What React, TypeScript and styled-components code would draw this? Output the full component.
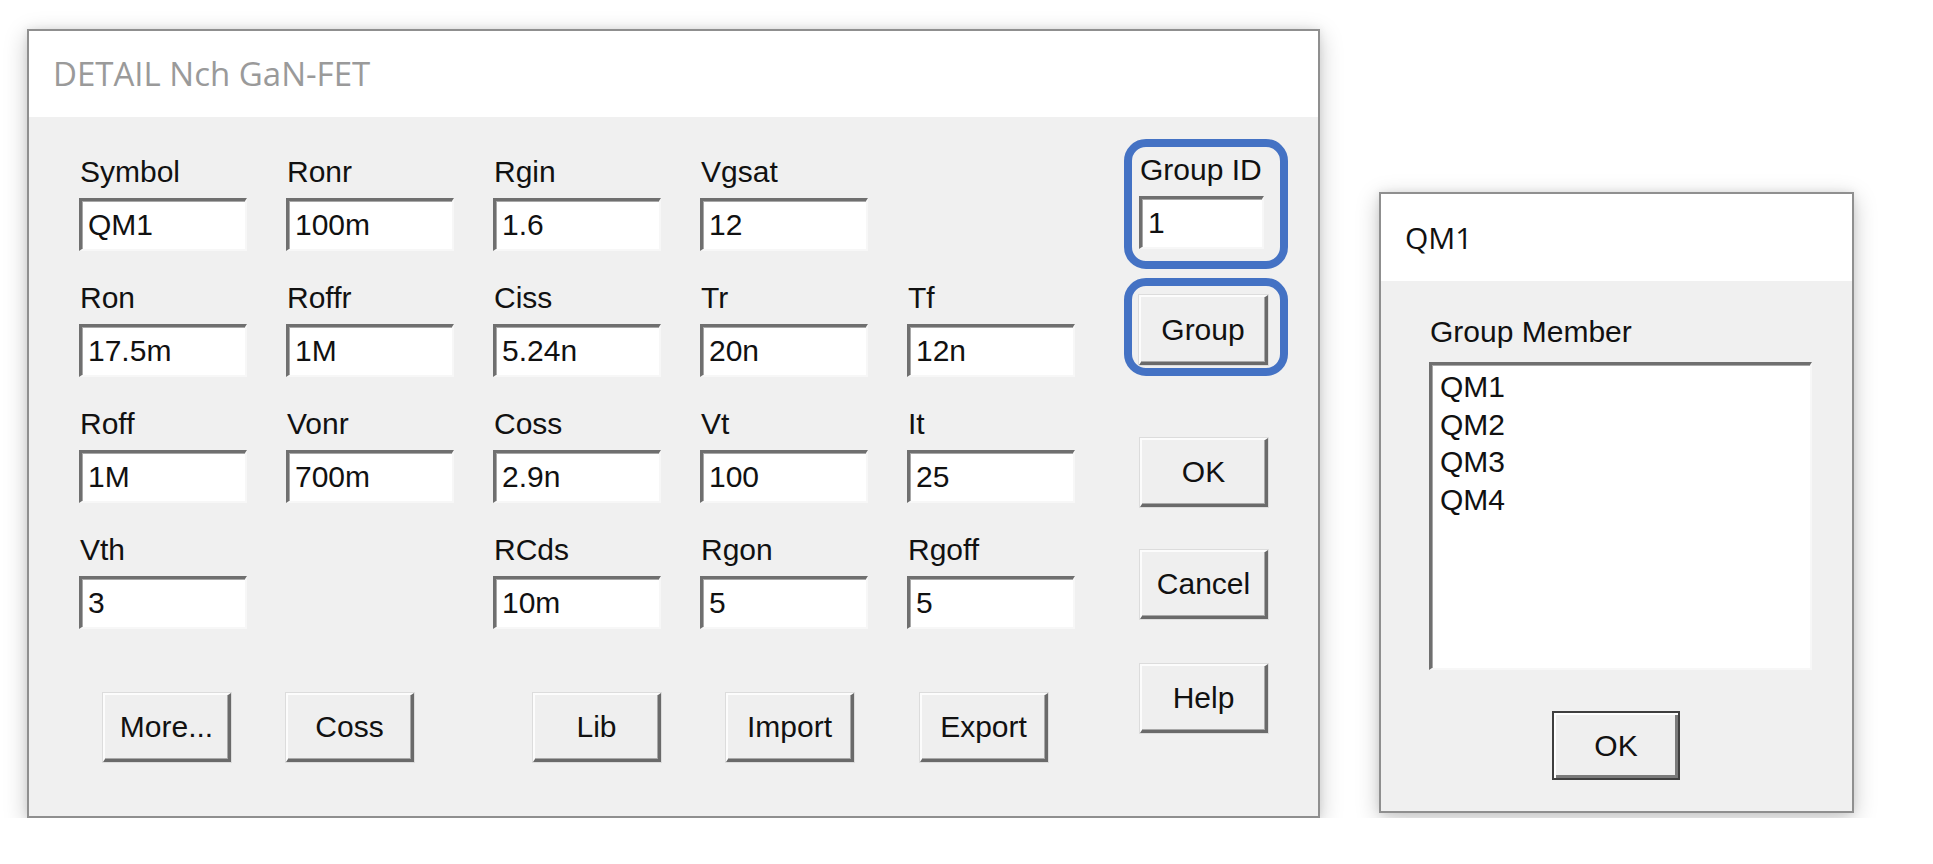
import React from 'react'
import styled, { createGlobalStyle } from 'styled-components'

type Param = { label: string; value: string } | null

const PARAMS: Param[][] = [
	[
		{ label: 'Symbol', value: 'QM1' },
		{ label: 'Ronr', value: '100m' },
		{ label: 'Rgin', value: '1.6' },
		{ label: 'Vgsat', value: '12' },
		null,
	],
	[
		{ label: 'Ron', value: '17.5m' },
		{ label: 'Roffr', value: '1M' },
		{ label: 'Ciss', value: '5.24n' },
		{ label: 'Tr', value: '20n' },
		{ label: 'Tf', value: '12n' },
	],
	[
		{ label: 'Roff', value: '1M' },
		{ label: 'Vonr', value: '700m' },
		{ label: 'Coss', value: '2.9n' },
		{ label: 'Vt', value: '100' },
		{ label: 'It', value: '25' },
	],
	[
		{ label: 'Vth', value: '3' },
		null,
		{ label: 'RCds', value: '10m' },
		{ label: 'Rgon', value: '5' },
		{ label: 'Rgoff', value: '5' },
	],
]

// shift = offset from the left of its column
const BOTTOM_BUTTONS = [
	{ text: 'More...', shift: 24 },
	{ text: 'Coss', shift: 0 },
	{ text: 'Lib', shift: 40 },
	{ text: 'Import', shift: 26 },
	{ text: 'Export', shift: 13 },
]

const MEMBERS = ['QM1', 'QM2', 'QM3', 'QM4']

//=> DOM
export default function App() {
	return (
		<>
			<GlobalStyle />
			<Desk>
				<Dialog $w={1293} $h={789}>
					<TitleBar $h={86}>
						<Title $muted>DETAIL Nch GaN-FET</Title>
					</TitleBar>
					<MainBody>
						<Fields>
							<ParamGrid>
								{PARAMS.flat().map((p, i) =>
									p ? (
										<Field key={i}>
											<Label>{p.label}</Label>
											<TextBox readOnly defaultValue={p.value} />
										</Field>
									) : (
										<div key={i} />
									)
								)}
							</ParamGrid>
							<ButtonRow>
								{BOTTOM_BUTTONS.map((b) => (
									<Cell key={b.text}>
										<Button $shift={b.shift}>{b.text}</Button>
									</Cell>
								))}
							</ButtonRow>
						</Fields>
						<SideColumn>
							<Highlight $pad='6px 0 12px 7px'>
								<Label>Group ID</Label>
								<TextBox readOnly defaultValue='1' $w={125} />
							</Highlight>
							<Highlight $pad='9px 0 3px 7px' $gap={9}>
								<Button $w={129} $h={70}>
									Group
								</Button>
							</Highlight>
							<Button $shift={16} $top={62}>
								OK
							</Button>
							<Button $shift={16} $top={43}>
								Cancel
							</Button>
							<Button $shift={16} $top={45}>
								Help
							</Button>
						</SideColumn>
					</MainBody>
				</Dialog>

				<Dialog $w={475} $h={621} $top={163}>
					<TitleBar $h={87}>
						<Title>QM1</Title>
					</TitleBar>
					<GroupBody>
						<Label>Group Member</Label>
						<ListBox>
							{MEMBERS.map((m) => (
								<ListItem key={m}>{m}</ListItem>
							))}
						</ListBox>
						<DefaultButton>OK</DefaultButton>
					</GroupBody>
				</Dialog>
			</Desk>
		</>
	)
}

//=> Style
const GlobalStyle = createGlobalStyle`
	* { box-sizing: border-box; }
	html, body {
		margin: 0;
		padding: 0;
		background: #ffffff;
	}
	body {
		font-family: 'Liberation Sans', Arial, sans-serif;
		color: #111;
	}
`

const Desk = styled.div`
	display: flex;
	align-items: flex-start;
	gap: 59px;
	padding: 29px 0 0 27px;
`

const Dialog = styled.section<{ $w: number; $h: number; $top?: number }>`
	width: ${(p) => p.$w}px;
	height: ${(p) => p.$h}px;
	margin-top: ${(p) => p.$top ?? 0}px;
	display: flex;
	flex-direction: column;
	background: #f0f0f0;
	border: 2px solid #8f8f8f;
	box-shadow: 0 6px 22px rgba(0, 0, 0, 0.22), 0 0 8px rgba(0, 0, 0, 0.08);
`

const TitleBar = styled.header<{ $h: number }>`
	height: ${(p) => p.$h}px;
	flex: none;
	display: flex;
	align-items: center;
	padding-left: 24px;
	background: #ffffff;
`

const Title = styled.h1<{ $muted?: boolean }>`
	margin: 0;
	font-family: 'Open Sans', 'Noto Sans', sans-serif;
	font-weight: 400;
	font-size: ${(p) => (p.$muted ? 33 : 30)}px;
	line-height: 40px;
	color: ${(p) => (p.$muted ? '#9a9a9a' : '#111')};
`

const MainBody = styled.div`
	flex: 1;
	display: flex;
	gap: 49px;
	padding: 22px 30px 0 50px;
`

const Fields = styled.div`
	display: flex;
	flex-direction: column;
	padding-top: 16px;
`

const ParamGrid = styled.div`
	display: grid;
	grid-template-columns: repeat(5, 168px);
	column-gap: 39px;
	row-gap: 30px;
`

const Field = styled.div`
	display: flex;
	flex-direction: column;
`

const Label = styled.span`
	display: block;
	height: 34px;
	margin: 0 0 9px 1px;
	font-size: 30px;
	line-height: 34px;
	color: #111;
	white-space: nowrap;
`

const TextBox = styled.input<{ $w?: number }>`
	display: block;
	width: ${(p) => (p.$w ? `${p.$w}px` : '100%')};
	height: 53px;
	margin: 0;
	padding: 0 0 0 6px;
	background: #ffffff;
	border-style: solid;
	border-width: 3px 2px 2px 3px;
	border-color: #6f6f6f #f7f7f7 #f7f7f7 #6f6f6f;
	box-shadow: inset 1px 1px 0 #a8a8a8;
	font-family: 'Liberation Sans', Arial, sans-serif;
	font-size: 30px;
	color: #111;
	outline: none;
`

const ButtonRow = styled.div`
	display: grid;
	grid-template-columns: repeat(5, 168px);
	column-gap: 39px;
	margin-top: 64px;
`

const Cell = styled.div`
	display: flex;
`

const Button = styled.button<{ $w?: number; $h?: number; $shift?: number; $top?: number }>`
	flex: none;
	width: ${(p) => p.$w ?? 128}px;
	height: ${(p) => p.$h ?? 69}px;
	margin: ${(p) => p.$top ?? 0}px 0 0 ${(p) => p.$shift ?? 0}px;
	padding: 0;
	display: flex;
	align-items: center;
	justify-content: center;
	background: #efefef;
	border-style: solid;
	border-width: 2px 3px 3px 2px;
	border-color: #fcfcfc #6a6a6a #6a6a6a #fcfcfc;
	box-shadow: inset -1px -1px 0 #a9a9a9, 0 0 0 1px #dcdcdc;
	font-family: 'Liberation Sans', Arial, sans-serif;
	font-size: 30px;
	color: #111;
	cursor: default;
`

const SideColumn = styled.div`
	width: 164px;
	display: flex;
	flex-direction: column;
	align-items: flex-start;
`

const Highlight = styled.div<{ $pad: string; $gap?: number }>`
	width: 164px;
	margin-top: ${(p) => p.$gap ?? 0}px;
	padding: ${(p) => p.$pad};
	border: 8px solid #4472c4;
	border-radius: 22px;
`

const GroupBody = styled.div`
	flex: 1;
	display: flex;
	flex-direction: column;
	padding: 34px 40px 0 48px;
`

const ListBox = styled.ul`
	width: 383px;
	height: 308px;
	margin: 4px 0 0;
	padding: 3px 8px;
	list-style: none;
	background: #ffffff;
	border-style: solid;
	border-width: 3px 2px 2px 3px;
	border-color: #6f6f6f #f7f7f7 #f7f7f7 #6f6f6f;
	box-shadow: inset 1px 1px 0 #a8a8a8;
`

const ListItem = styled.li`
	font-size: 30px;
	line-height: 37.5px;
	color: #111;
`

const DefaultButton = styled.button`
	width: 128px;
	height: 69px;
	margin: 41px 0 0 123px;
	padding: 0;
	background: #efefef;
	border: 2px solid #3f3f3f;
	box-shadow: inset 2px 2px 0 #ffffff, inset -3px -3px 0 #7a7a7a;
	font-family: 'Liberation Sans', Arial, sans-serif;
	font-size: 30px;
	color: #111;
	cursor: default;
`
